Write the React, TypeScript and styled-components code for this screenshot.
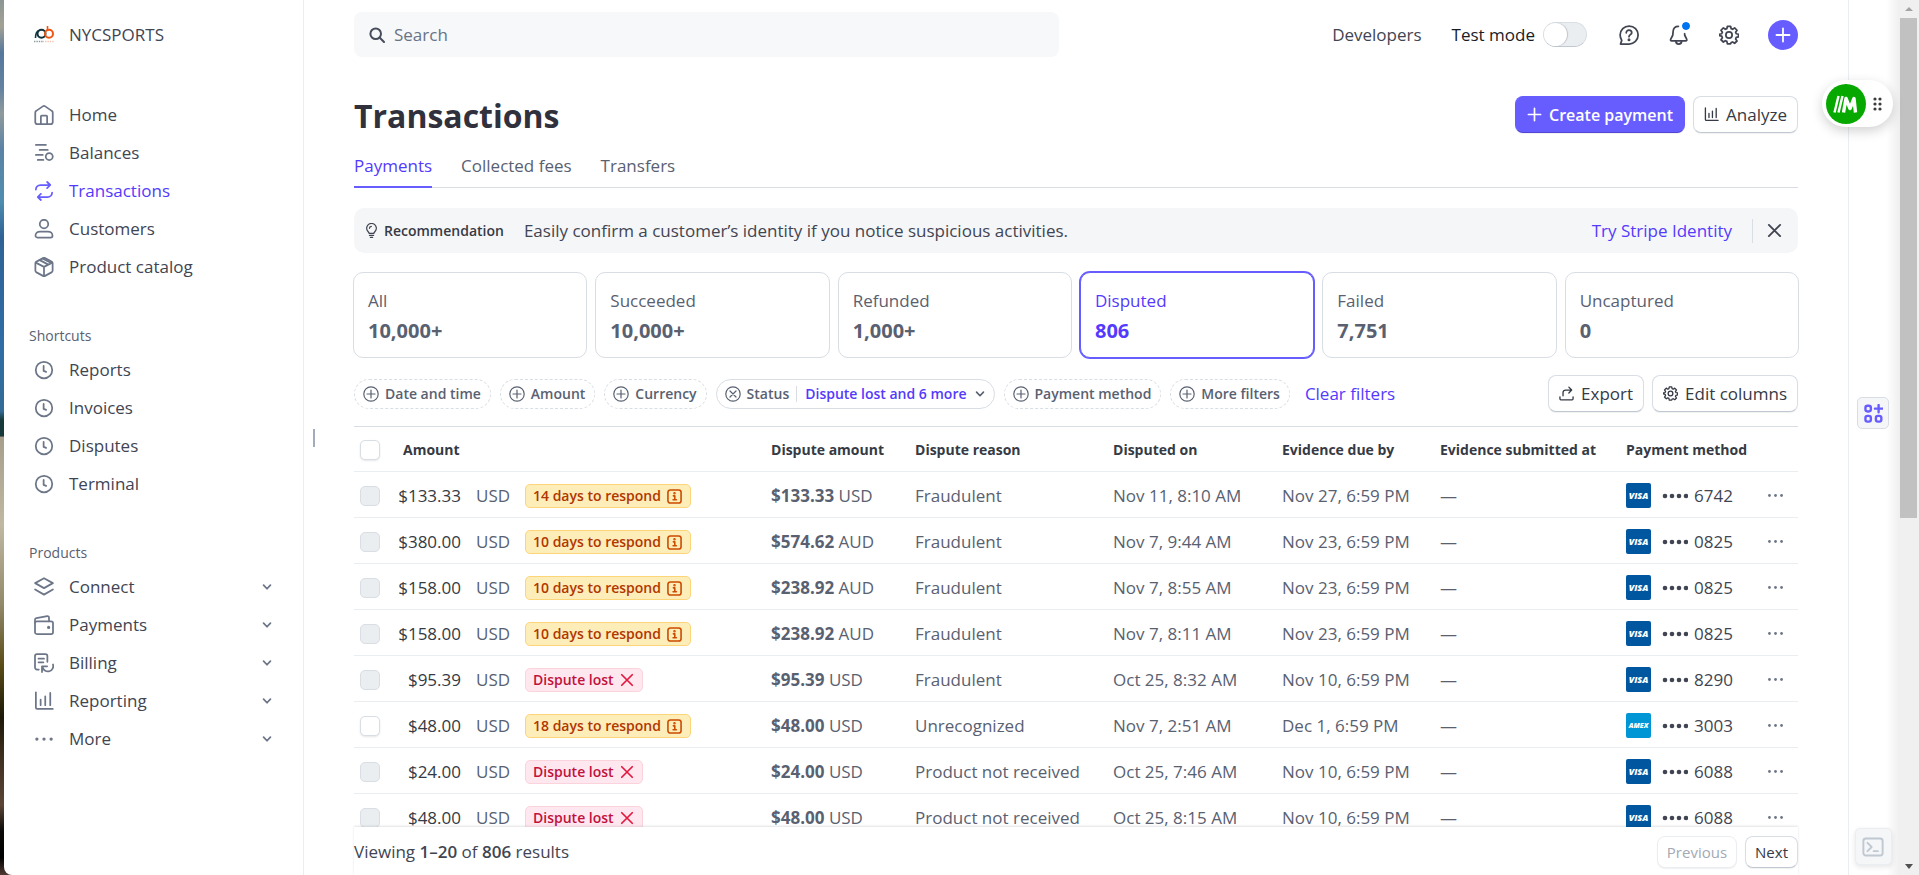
import React from "react";
import styled, { createGlobalStyle, css } from "styled-components";

const c = {
  text: "#353a44",
  muted: "#596171",
  icon: "#6c7688",
  brand: "#533afd",
  fill: "#675dff",
  line: "#ebeef1",
  border: "#d8dee4",
};

const Global = createGlobalStyle`
  *, *::before, *::after { box-sizing: border-box; }
  body {
    margin: 0;
    background: #fff;
    color: ${c.text};
    font: 400 17px/24px "Open Sans", "Noto Sans", sans-serif;
  }
  button, input { font: inherit; color: inherit; }
  button { cursor: pointer; white-space: nowrap; }
  a { color: inherit; text-decoration: none; }
  svg { display: block; flex: none; }
`;

/* ---------- shell ---------- */

const Shell = styled.div`
  display: flex;
  height: 100vh;
  overflow: hidden;
  background: linear-gradient(
    to bottom,
    #8d9594 0, #a3a194 3%, #56789b 6%, #6382a0 10%, #8f9a9c 13%, #5b83a5 17%,
    #4f8db0 23%, #2f6396 27%, #2f6da5 40%, #336b95 47%, #17393b 48%, #17393b 49.8%,
    #a79f8b 50%, #c0b8a0 60%, #938a6c 69%, #5b4c17 76%, #1c1808 82%,
    #3b2d1c 86%, #5c4536 92%, #0b0a08 95%, #000 98%, #513a33 100%
  );
`;

const Sidebar = styled.aside`
  flex: none;
  width: 300px;
  margin-left: 4px;
  padding: 20px 24px;
  background: #fff;
  border-right: 1px solid ${c.line};
  border-bottom-left-radius: 8px;
`;

const Main = styled.main`
  position: relative;
  flex: 1;
  min-width: 0;
  display: flex;
  flex-direction: column;
  padding: 12px 50px 0;
  background: #fff;
`;

const ResizeHandle = styled.span`
  position: absolute;
  left: 9px;
  top: 49%;
  width: 2px;
  height: 18px;
  background: #a3acba;
`;

const Rail = styled.aside`
  position: relative;
  flex: none;
  width: 50px;
  display: flex;
  flex-direction: column;
  align-items: center;
  justify-content: space-between;
  padding: 397px 1px 10px 0;
  background: linear-gradient(to right, #fff 76%, #f1f1f1);
  border-left: 1px solid ${c.line};
`;

const RailButton = styled.button<{ $raised?: boolean }>`
  display: grid;
  place-items: center;
  width: ${(p) => (p.$raised ? 37 : 32)}px;
  height: ${(p) => (p.$raised ? 37 : 32)}px;
  padding: 0;
  border: 1px solid ${(p) => (p.$raised ? c.line : c.border)};
  border-radius: 5px;
  background: #f5f6f8;
  color: ${(p) => (p.$raised ? "#c0c8d2" : c.fill)};
  box-shadow: ${(p) => (p.$raised ? "0 2px 5px rgba(48, 49, 61, 0.12)" : "none")};
`;

const FloatingWidget = styled.div`
  position: absolute;
  top: 80px;
  right: 5px;
  display: flex;
  align-items: center;
  gap: 7px;
  width: 71px;
  height: 47px;
  padding-left: 4px;
  border-radius: 24px;
  background: #fff;
  box-shadow: 0 4px 12px rgba(0, 0, 0, 0.18);
`;

const ScrollTrack = styled.div`
  flex: none;
  width: 21px;
  display: flex;
  flex-direction: column;
  align-items: center;
  padding: 7px 2px 6px;
  background: #f0f0f0;
`;

const ScrollThumb = styled.div`
  width: 17px;
  height: 58%;
  margin-top: 7px;
  margin-bottom: auto;
  background: #c1c1c1;
`;

/* ---------- sidebar ---------- */

const Account = styled.div`
  display: flex;
  align-items: center;
  gap: 15px;
  height: 30px;
  padding-left: 6px;
  color: #414552;
  font-weight: 500;
`;

const NavList = styled.ul`
  list-style: none;
  margin: 0;
  padding: 0;
`;

const NavLink = styled.a<{ $active?: boolean }>`
  display: flex;
  align-items: center;
  gap: 15px;
  height: 38px;
  padding: 0 7px 0 6px;
  color: ${(p) => (p.$active ? c.brand : "#414552")};
  font-weight: ${(p) => (p.$active ? 500 : 400)};
  > svg { color: ${(p) => (p.$active ? c.fill : c.icon)}; }
  > svg:last-child { margin-left: auto; }
  > svg:first-child { margin-left: 0; }
`;

const NavGroup = styled.nav<{ $first?: boolean }>`
  margin-top: ${(p) => (p.$first ? 46 : 35)}px;
`;

const NavHeading = styled.h2`
  margin: 0;
  padding-left: 1px;
  font-size: 14px;
  line-height: 30px;
  font-weight: 400;
  color: ${c.muted};
`;

/* ---------- header ---------- */

const TopBar = styled.header`
  display: flex;
  align-items: center;
  justify-content: space-between;
  height: 45px;
`;

const SearchBox = styled.label`
  display: flex;
  align-items: center;
  gap: 9px;
  flex: 0 1 705px;
  height: 45px;
  padding: 0 15px;
  border-radius: 8px;
  background: #f6f8fa;
  color: #474e5a;
  input {
    flex: 1;
    padding: 0;
    border: 0;
    outline: 0;
    background: none;
    &::placeholder { color: #687385; opacity: 1; }
  }
`;

const TopActions = styled.div`
  display: flex;
  align-items: center;
  color: #414552;
`;

const DevLink = styled.a`
  margin-right: 30px;
  font-weight: 500;
`;

const TestMode = styled.label`
  display: flex;
  align-items: center;
  gap: 8px;
  margin-right: 31px;
  font-weight: 500;
  color: #1a1b25;
`;

const Toggle = styled.input`
  appearance: none;
  width: 44px;
  height: 25px;
  margin: 0;
  padding: 0;
  border: 1px solid ${c.border};
  border-bottom-color: #c0c8d2;
  border-radius: 13px;
  background: #ebeef1;
  &::before {
    content: "";
    display: block;
    width: 23px;
    height: 23px;
    border-radius: 50%;
    background: #fff;
    box-shadow: 1px 0 1px rgba(64, 68, 82, 0.25);
  }
`;

const IconButton = styled.button`
  position: relative;
  display: grid;
  place-items: center;
  width: 22px;
  height: 30px;
  margin-right: 28px;
  padding: 0;
  border: 0;
  background: none;
`;

const AlertDot = styled.span`
  position: absolute;
  right: 0;
  top: 2px;
  width: 8px;
  height: 8px;
  border-radius: 50%;
  background: #0074f0;
  outline: 2px solid #fff;
`;

const AddButton = styled.button`
  display: grid;
  place-items: center;
  width: 30px;
  height: 30px;
  padding: 0;
  border: 0;
  border-radius: 50%;
  background: ${c.fill};
  color: #fff;
`;

/* ---------- page title and tabs ---------- */

const TitleRow = styled.div`
  display: flex;
  align-items: center;
  justify-content: space-between;
  margin-top: 35px;
  height: 45px;
  h1 {
    margin: 3px 0 0;
    font-size: 32px;
    line-height: 44px;
    font-weight: 700;
    color: #30313d;
  }
`;

const Buttons = styled.div`
  display: flex;
  gap: 8px;
`;

const Button = styled.button<{ $primary?: boolean; $small?: boolean }>`
  display: flex;
  align-items: center;
  gap: 7px;
  height: ${(p) => (p.$small ? 32 : 37)}px;
  padding: 0 ${(p) => (p.$small ? 9 : 10)}px;
  border: 1px solid ${c.border};
  border-bottom-color: #c0c8d2;
  border-radius: 8px;
  background: #fff;
  color: ${c.text};
  font-size: ${(p) => (p.$small ? 15 : 17)}px;
  font-weight: 500;
  box-shadow: 0 1px 1px rgba(0, 0, 0, 0.06);
  &:disabled { color: #a3a9b5; border-color: ${c.line}; }
  ${(p) => p.$primary && css`
    padding: 0 11px;
    background: ${c.fill};
    border-color: ${c.fill};
    border-bottom-color: #5246d9;
    color: #fff;
    font-size: 16px;
    font-weight: 600;
  `}
`;

const Tabs = styled.nav`
  display: flex;
  gap: 29px;
  height: 51px;
  border-bottom: 1px solid ${c.border};
`;

const Tab = styled.a<{ $active?: boolean }>`
  height: 51px;
  padding-top: 17px;
  border-bottom: 2px solid ${(p) => (p.$active ? c.fill : "transparent")};
  color: ${(p) => (p.$active ? c.brand : c.muted)};
  font-weight: 500;
`;

const Banner = styled.section`
  display: flex;
  align-items: center;
  height: 45px;
  margin-top: 20px;
  padding: 0 16px 0 10px;
  border-radius: 10px;
  background: #f5f6f8;
  color: #414552;
  strong {
    margin: 0 20px 0 5px;
    font-size: 14px;
    font-weight: 600;
    color: ${c.text};
  }
  a {
    margin-left: auto;
    padding-right: 20px;
    font-weight: 500;
    color: ${c.brand};
  }
`;

const CloseButton = styled.button`
  height: 24px;
  padding: 0 0 0 14px;
  border: 0;
  border-left: 1px solid ${c.border};
  background: none;
`;

/* ---------- status cards ---------- */

const Cards = styled.div`
  display: grid;
  grid-template-columns: repeat(6, 1fr);
  gap: 8px;
  margin: 19px -1px 0;
`;

const Card = styled.button<{ $active?: boolean }>`
  height: 86px;
  padding: 1px 13px 0 14px;
  border: 1px solid ${c.border};
  border-radius: 10px;
  background: #fff;
  color: ${c.muted};
  text-align: left;
  line-height: 30px;
  span, b { display: block; }
  b { font-size: 20px; }
  ${(p) => p.$active && css`
    border-color: ${c.fill};
    box-shadow: 0 0 0 1px ${c.fill};
    color: ${c.brand};
    font-weight: 500;
  `}
`;

/* ---------- filters ---------- */

const FilterBar = styled.div`
  display: flex;
  align-items: center;
  gap: 9px;
  margin: 17px 0 14px;
`;

const Chip = styled.button<{ $set?: boolean }>`
  display: flex;
  align-items: center;
  gap: 6px;
  height: 30px;
  padding: 0 9px 0 8px;
  border: 1px ${(p) => (p.$set ? "solid" : "dashed")} ${c.border};
  border-radius: 15px;
  background: #fff;
  color: ${c.muted};
  font-size: 14px;
  font-weight: 600;
  em {
    display: flex;
    align-items: center;
    gap: 8px;
    margin-left: 1px;
    padding-left: 8px;
    border-left: 1px solid ${c.border};
    line-height: 16px;
    font-style: normal;
    color: ${c.brand};
    svg { color: ${c.muted}; }
  }
`;

const ClearFilters = styled.a`
  margin: 0 auto 0 6px;
  font-weight: 500;
  color: ${c.brand};
  white-space: nowrap;
`;

/* ---------- table ---------- */

const TableArea = styled.div`
  flex: 1;
  min-height: 0;
  overflow: hidden;
`;

const Table = styled.table`
  width: 100%;
  table-layout: fixed;
  border-collapse: separate;
  border-spacing: 0;
  color: ${c.muted};
  white-space: nowrap;
`;

const Col = styled.col<{ $w: number }>`
  width: ${(p) => p.$w}px;
`;

const Th = styled.th<{ $inset?: boolean }>`
  height: 46px;
  padding: 2px 0 0 ${(p) => (p.$inset ? 5 : 0)}px;
  border-top: 1px solid ${c.border};
  border-bottom: 1px solid ${c.line};
  text-align: left;
  font-size: 14px;
  font-weight: 700;
  color: ${c.text};
`;

const Td = styled.td<{ $right?: boolean; $pad?: number }>`
  height: 46px;
  padding: 2px 0 0 ${(p) => p.$pad ?? 0}px;
  border-bottom: 1px solid ${c.line};
  text-align: ${(p) => (p.$right ? "right" : "left")};
`;

const Amount = styled.span`
  font-weight: 500;
  color: ${c.text};
`;

const Check = styled.input`
  appearance: none;
  display: block;
  width: 20px;
  height: 20px;
  margin: 0 0 0 6px;
  border: 1px solid ${c.border};
  border-radius: 5px;
  background: #fff;
  box-shadow: 0 1px 2px rgba(48, 49, 61, 0.12);
  &:disabled {
    background: #ebeef1;
    box-shadow: none;
  }
`;

const Badge = styled.span<{ $lost?: boolean }>`
  display: inline-flex;
  align-items: center;
  gap: 6px;
  height: 24px;
  padding: 0 8px 0 7px;
  border: 1px solid ${(p) => (p.$lost ? "#fbd3dc" : "#fcd579")};
  border-radius: 5px;
  background: ${(p) => (p.$lost ? "#ffe7f0" : "#fcedb9")};
  color: ${(p) => (p.$lost ? "#c0123c" : "#b13600")};
  font-size: 14px;
  font-weight: 600;
  vertical-align: middle;
  svg { color: ${(p) => (p.$lost ? "#df1b41" : "#cc4b00")}; }
`;

const Method = styled.span`
  display: flex;
  align-items: center;
  gap: 11px;
  color: #414552;
`;

const Brand = styled.span<{ $amex?: boolean }>`
  display: grid;
  place-items: center;
  width: 25px;
  height: 25px;
  border-radius: 2px;
  background: ${(p) => (p.$amex ? "#0095d5" : "#00579f")};
  color: #fff;
  font: italic 800 ${(p) => (p.$amex ? 7 : 9)}px/25px "Open Sans", sans-serif;
`;

const Masked = styled.span`
  display: flex;
  align-items: center;
  gap: 6px;
`;

const RowMenu = styled.button`
  display: block;
  padding: 4px 0;
  margin-left: 7px;
  border: 0;
  background: none;
  color: ${c.icon};
`;

const Footer = styled.footer`
  display: flex;
  align-items: center;
  justify-content: space-between;
  height: 48px;
  padding-top: 2px;
  background: #fff;
  color: #414552;
  box-shadow: 0 -1px 2px rgba(48, 49, 61, 0.14);
  b { font-weight: 600; }
`;

/* ---------- icons ---------- */

type SvgProps = { size?: number; sw?: number; children: React.ReactNode };
const Svg = ({ size = 20, sw = 1.4, children }: SvgProps) => (
  <svg width={size} height={size} viewBox="0 0 16 16" fill="none" stroke="currentColor" strokeWidth={sw} strokeLinecap="round" strokeLinejoin="round" aria-hidden="true">
    {children}
  </svg>
);

const icons = {
  home: <><path d="M1 6.2v7.3c0 1 .8 1.8 1.8 1.8h10.4c1 0 1.8-.8 1.8-1.8V6.2c0-.6-.3-1.2-.8-1.5L9 1.1a1.8 1.8 0 0 0-2 0L1.800 4.700c-.5.3-.8.9-.8 1.500Z" /><path d="M5.500 15V9.200c0-.4.300-.7.700-.7h3.600c.4 0 .7.300.7.700V15" /></>,
  balances: <><path d="M1.500 1.500h8M4.500 5.500H11M1.500 9.500h5.500M3 13.500h4.500" /><circle cx="12.200" cy="10.800" r="2.800" /></>,
  transactions: <><path d="M1.500 6.800c0-2 1.600-3.600 3.600-3.600H13M10.500.8 13 3.200l-2.500 2.500M14.500 9.200c0 2-1.600 3.600-3.600 3.600H3M5.500 15.200 3 12.800l2.500-2.500" /></>,
  customers: <><circle cx="8" cy="4" r="3.400" /><path d="M1.200 13.300c0-2 1.600-3.300 3.600-3.300h6.400c2 0 3.600 1.300 3.600 3.300 0 .9-.7 1.500-1.500 1.500H2.700c-.8 0-1.500-.6-1.500-1.500Z" /></>,
  catalog: <><path d="M7.200.9 2 3.700c-.6.300-.9.900-.9 1.500v5.600c0 .6.300 1.200.9 1.500l5.200 2.800c.5.300 1.100.3 1.600 0l5.200-2.800c.6-.3.900-.9.900-1.500V5.200c0-.6-.3-1.200-.9-1.500L8.800.9a1.700 1.700 0 0 0-1.600 0Z" /><path d="m1.400 4.500 6.600 3.400 6.600-3.400M8 7.900v7.300M4.600 2.500l6.500 3.400M7 1.400l6 3" /></>,
  clock: <><circle cx="8" cy="8" r="6.600" /><path d="M7.700 4.700V8.700l2 .8" /></>,
  connect: <><path d="M8 1 .9 4.900 8 8.900l7.100-4L8 1Z" /><path d="m.9 10 7.100 4.100 7.100-4.100" /></>,
  payments: <><rect x=".8" y="5" width="14.400" height="10.200" rx="1.500" /><path d="M.8 6V3.800c0-.7.500-1.200 1.100-1.300L10.600.9c.7-.1 1.400.4 1.400 1.200V5" /><circle cx="11.700" cy="9.900" r=".6" fill="currentColor" /></>,
  billing: <><path d="M3.800 13.200H2.400c-.9 0-1.600-.7-1.600-1.600V2.400C.8 1.500 1.500.8 2.400.8h6.700c.9 0 1.600.7 1.600 1.600V7M3.600 4.500H8M3.600 7.400H7.500M15.200 9.200a4.300 4.300 0 0 1-8.300 2.500M6.400 15.200V10.600H10.500" /></>,
  reporting: <path d="M1.500 1v12.300c0 .6.400 1 1 1H15M5.300 6.800v4.500M9 4.300v7M13 1.500v9.800" />,
  more: <g fill="currentColor" stroke="none"><circle cx="2.300" cy="8" r="1.300" /><circle cx="8" cy="8" r="1.300" /><circle cx="13.700" cy="8" r="1.300" /></g>,
  chevron: <path d="m2.500 5 5.500 5.800L13.500 5" />,
  plus: <path d="M8 1.500v13M1.500 8h13" />,
  close: <path d="m2 2 12 12M14 2 2 14" />,
  addCircle: <><circle cx="8" cy="8" r="7.200" /><path d="M8 4v8M4 8h8" /></>,
  removeCircle: <><circle cx="8" cy="8" r="7.200" /><path d="m5 5 6 6M11 5l-6 6" /></>,
  search: <><circle cx="6.700" cy="6.700" r="5.300" /><path d="m10.800 10.800 4.200 4.200" /></>,
  help: <><path d="M1.200 15.200h6.800A7.200 7.200 0 1 0 .9 8c0 1.700.5 3 1.300 4.300L1.200 15.200Z" /><path d="M5.800 6.200c0-1.300 1-2.200 2.200-2.200s2.200.9 2.200 2.100c0 1.600-2.200 1.600-2.200 3.200" /><circle cx="8" cy="11.700" r=".5" fill="currentColor" /></>,
  bell: <><path d="M7.500 1C5 1 3.500 2.700 3.300 5L3 8.200 1.300 11.500c-.3.500.1 1.200.7 1.200h11.500c.6 0 1-.7.700-1.200L12.600 8.200 12.500 7" /><path d="M5.500 13.200c.2 1.300 1.100 2 2.300 2s2.100-.7 2.300-2" /></>,
  gear: <><path d="M6.700 1h2.600l.4 1.900 1.200.5 1.600-1.100 1.900 1.900-1.100 1.600.5 1.200 1.800.4v2.100l-1.800.4-.5 1.300 1.100 1.600-1.900 1.800-1.600-1-1.200.5L9.300 15H6.700l-.4-1.900-1.200-.5-1.600 1-1.900-1.800 1.100-1.600-.5-1.300-1.800-.4V7.400l1.800-.4.500-1.200-1.100-1.600 1.900-1.900 1.600 1.100 1.200-.5L6.700 1Z" /><circle cx="8" cy="8" r="2.500" /></>,
  bulb: <><path d="M5.500 11C5.300 9.500 2.800 8.600 2.800 5.700a5.200 5.200 0 0 1 10.400 0c0 2.900-2.500 3.800-2.700 5.300Z" /><path d="M5.800 13.200h4.400M6.800 15.400h2.400M5.800 5.700c0-1.200.8-2 2-2.100" /></>,
  export: <path d="M1 11.500v2.200c0 .6.400 1 1 1h12c.6 0 1-.4 1-1v-2.200M4.300 10.500V7c0-1.500 1.200-2.700 2.700-2.700h6.300M10.500 1.200l3 3.100-3 3.100" />,
  info: <><rect x="1" y="1" width="14" height="14" rx="2.500" /><path d="M6.800 7.300H8.300v4M6.500 11.500h3.500" /><circle cx="8" cy="4.600" r=".5" fill="currentColor" /></>,
  apps: <><rect x="1.200" y="1.500" width="4.600" height="4.800" rx="1.800" /><rect x="1.200" y="10" width="4.600" height="4.800" rx="1.800" /><rect x="10" y="10" width="4.600" height="4.800" rx="1.800" /><path d="M12.300.8v6.200M9.200 3.900h6.200" /></>,
  terminal: <><rect x="1" y="1.800" width="14" height="12.400" rx="1.800" /><path d="m4 5 3 3-3 3M8.500 11H11.500" /></>,
};

type IconName = keyof typeof icons;
const Icon = ({ name, size, sw }: { name: IconName; size?: number; sw?: number }) => (
  <Svg size={size} sw={sw}>{icons[name]}</Svg>
);

const AccountLogo = () => (
  <svg width="20" height="20" viewBox="0 0 20 20" fill="none" aria-hidden="true">
    <path d="M1.500 13C1.500 9.500 2.500 6.500 5 5.500" stroke="#123a47" strokeWidth="1.600" />
    <circle cx="7.500" cy="8.700" r="4" stroke="#10303c" strokeWidth="2" />
    <path d="M13.500 1v5" stroke="#f0560f" strokeWidth="1.600" />
    <circle cx="15" cy="8.700" r="4" stroke="#f0560f" strokeWidth="2" />
    <path d="M0 16.500h10" stroke="#8d9ba1" strokeWidth="1.500" strokeDasharray="1.400 1" />
    <path d="M11 16.500h9" stroke="#f9c3ab" strokeWidth="1.500" strokeDasharray="1.400 1" />
  </svg>
);

const WidgetLogo = () => (
  <svg width="40" height="40" viewBox="0 0 40 40" aria-hidden="true">
    <circle cx="20" cy="20" r="20" fill="#07a900" />
    <g fill="none" stroke="#fff">
      <path d="M8.500 28.500 12.500 12" strokeWidth="2.400" />
      <path d="M12.500 28.500 16.500 12" strokeWidth="2.400" />
      <path d="M17.500 28.500 20 14.500 24 24.500 28 14.500 29.500 28.500" strokeWidth="3.400" strokeLinejoin="round" />
    </g>
  </svg>
);

const Grip = () => (
  <svg width="9" height="14" viewBox="0 0 9 14" fill="#3b3b3b" aria-hidden="true">
    {[2, 7, 12].map((y) => (
      <g key={y}><circle cx="2" cy={y} r="1.600" /><circle cx="7" cy={y} r="1.600" /></g>
    ))}
  </svg>
);

const Bullets = () => (
  <svg width="26" height="6" viewBox="0 0 26 6" fill="currentColor" role="img" aria-label="ending in">
    {[2, 9, 16, 23].map((x) => <circle key={x} cx={x + 1} cy="3" r="2.300" />)}
  </svg>
);

/* ---------- data ---------- */

const primaryNav: [string, IconName][] = [
  ["Home", "home"], ["Balances", "balances"], ["Transactions", "transactions"],
  ["Customers", "customers"], ["Product catalog", "catalog"],
];
const shortcuts = ["Reports", "Invoices", "Disputes", "Terminal"];
const products: [string, IconName][] = [
  ["Connect", "connect"], ["Payments", "payments"], ["Billing", "billing"],
  ["Reporting", "reporting"], ["More", "more"],
];
const cards = [
  ["All", "10,000+"], ["Succeeded", "10,000+"], ["Refunded", "1,000+"],
  ["Disputed", "806"], ["Failed", "7,751"], ["Uncaptured", "0"],
];

type Row = {
  amount: string; days?: number; disputed: string; cur: string; reason: string;
  on: string; due: string; last4: string; amex?: boolean;
};
const rows: Row[] = [
  { amount: "$133.33", days: 14, disputed: "$133.33", cur: "USD", reason: "Fraudulent", on: "Nov 11, 8:10 AM", due: "Nov 27, 6:59 PM", last4: "6742" },
  { amount: "$380.00", days: 10, disputed: "$574.62", cur: "AUD", reason: "Fraudulent", on: "Nov 7, 9:44 AM", due: "Nov 23, 6:59 PM", last4: "0825" },
  { amount: "$158.00", days: 10, disputed: "$238.92", cur: "AUD", reason: "Fraudulent", on: "Nov 7, 8:55 AM", due: "Nov 23, 6:59 PM", last4: "0825" },
  { amount: "$158.00", days: 10, disputed: "$238.92", cur: "AUD", reason: "Fraudulent", on: "Nov 7, 8:11 AM", due: "Nov 23, 6:59 PM", last4: "0825" },
  { amount: "$95.39", disputed: "$95.39", cur: "USD", reason: "Fraudulent", on: "Oct 25, 8:32 AM", due: "Nov 10, 6:59 PM", last4: "8290" },
  { amount: "$48.00", days: 18, disputed: "$48.00", cur: "USD", reason: "Unrecognized", on: "Nov 7, 2:51 AM", due: "Dec 1, 6:59 PM", last4: "3003", amex: true },
  { amount: "$24.00", disputed: "$24.00", cur: "USD", reason: "Product not received", on: "Oct 25, 7:46 AM", due: "Nov 10, 6:59 PM", last4: "6088" },
  { amount: "$48.00", disputed: "$48.00", cur: "USD", reason: "Product not received", on: "Oct 25, 8:15 AM", due: "Nov 10, 6:59 PM", last4: "6088" },
];
const columnWidths = [44, 63, 64, 246, 144, 198, 169, 158, 186, 134, 38];

/* ---------- page ---------- */

const AddChip = ({ label }: { label: string }) => (
  <Chip type="button"><Icon name="addCircle" size={16} sw={1.2} />{label}</Chip>
);

const PaymentRow = ({ row }: { row: Row }) => (
  <tr>
    <Td><Check type="checkbox" aria-label={`Select ${row.amount}`} disabled={!row.amex} /></Td>
    <Td $right><Amount>{row.amount}</Amount></Td>
    <Td $pad={15}>USD</Td>
    <Td>
      {row.days
        ? <Badge>{row.days} days to respond<Icon name="info" size={15} sw={1.7} /></Badge>
        : <Badge $lost>Dispute lost<Icon name="close" size={14} sw={2} /></Badge>}
    </Td>
    <Td><b>{row.disputed}</b> {row.cur}</Td>
    <Td>{row.reason}</Td>
    <Td>{row.on}</Td>
    <Td>{row.due}</Td>
    <Td>—</Td>
    <Td>
      <Method>
        <Brand $amex={row.amex}>{row.amex ? "AMEX" : "VISA"}</Brand>
        <Masked><Bullets />{row.last4}</Masked>
      </Method>
    </Td>
    <Td><RowMenu type="button" aria-label="Row actions"><Icon name="more" size={17} /></RowMenu></Td>
  </tr>
);

export default function App() {
  return (
    <>
      <Global />
      <Shell>
        <Sidebar>
          <Account><AccountLogo />NYCSPORTS</Account>
          <NavGroup $first aria-label="Main">
            <NavList>
              {primaryNav.map(([label, icon]) => (
                <li key={label}>
                  <NavLink href="#" $active={label === "Transactions"}><Icon name={icon} />{label}</NavLink>
                </li>
              ))}
            </NavList>
          </NavGroup>
          <NavGroup aria-labelledby="shortcuts">
            <NavHeading id="shortcuts">Shortcuts</NavHeading>
            <NavList>
              {shortcuts.map((label) => (
                <li key={label}><NavLink href="#"><Icon name="clock" />{label}</NavLink></li>
              ))}
            </NavList>
          </NavGroup>
          <NavGroup aria-labelledby="products">
            <NavHeading id="products">Products</NavHeading>
            <NavList>
              {products.map(([label, icon]) => (
                <li key={label}>
                  <NavLink href="#"><Icon name={icon} />{label}<Icon name="chevron" size={10} sw={2.800} /></NavLink>
                </li>
              ))}
            </NavList>
          </NavGroup>
        </Sidebar>

        <Main>
          <ResizeHandle />
          <TopBar>
            <SearchBox>
              <Icon name="search" size={16} sw={2} />
              <input type="text" placeholder="Search" aria-label="Search" />
            </SearchBox>
            <TopActions>
              <DevLink href="#">Developers</DevLink>
              <TestMode>Test mode<Toggle type="checkbox" role="switch" /></TestMode>
              <IconButton type="button" aria-label="Help"><Icon name="help" /></IconButton>
              <IconButton type="button" aria-label="Notifications"><Icon name="bell" /><AlertDot /></IconButton>
              <IconButton type="button" aria-label="Settings"><Icon name="gear" /></IconButton>
              <AddButton type="button" aria-label="Create"><Icon name="plus" size={16} sw={1.800} /></AddButton>
            </TopActions>
          </TopBar>

          <TitleRow>
            <h1>Transactions</h1>
            <Buttons>
              <Button $primary type="button"><Icon name="plus" size={15} sw={1.800} />Create payment</Button>
              <Button type="button"><Icon name="reporting" size={15} />Analyze</Button>
            </Buttons>
          </TitleRow>
          <Tabs>
            <Tab href="#" $active>Payments</Tab>
            <Tab href="#">Collected fees</Tab>
            <Tab href="#">Transfers</Tab>
          </Tabs>

          <Banner>
            <Icon name="bulb" size={15} sw={1.300} />
            <strong>Recommendation</strong>
            <span>Easily confirm a customer’s identity if you notice suspicious activities.</span>
            <a href="#">Try Stripe Identity</a>
            <CloseButton type="button" aria-label="Dismiss"><Icon name="close" size={15} sw={2} /></CloseButton>
          </Banner>

          <Cards>
            {cards.map(([label, count]) => (
              <Card key={label} type="button" $active={label === "Disputed"}>
                <span>{label}</span>
                <b>{count}</b>
              </Card>
            ))}
          </Cards>

          <FilterBar>
            <AddChip label="Date and time" />
            <AddChip label="Amount" />
            <AddChip label="Currency" />
            <Chip $set type="button">
              <Icon name="removeCircle" size={16} sw={1.200} />Status
              <em>Dispute lost and 6 more<Icon name="chevron" size={10} sw={2.600} /></em>
            </Chip>
            <AddChip label="Payment method" />
            <AddChip label="More filters" />
            <ClearFilters href="#">Clear filters</ClearFilters>
            <Buttons>
              <Button type="button"><Icon name="export" size={15} />Export</Button>
              <Button type="button"><Icon name="gear" size={15} />Edit columns</Button>
            </Buttons>
          </FilterBar>

          <TableArea>
            <Table>
              <colgroup>{columnWidths.map((w, i) => <Col key={i} $w={w} />)}</colgroup>
              <thead>
                <tr>
                  <Th><Check type="checkbox" aria-label="Select all" /></Th>
                  <Th $inset colSpan={3}>Amount</Th>
                  <Th>Dispute amount</Th>
                  <Th>Dispute reason</Th>
                  <Th>Disputed on</Th>
                  <Th>Evidence due by</Th>
                  <Th>Evidence submitted at</Th>
                  <Th colSpan={2}>Payment method</Th>
                </tr>
              </thead>
              <tbody>{rows.map((row, i) => <PaymentRow key={i} row={row} />)}</tbody>
            </Table>
          </TableArea>

          <Footer>
            <span>Viewing <b>1–20</b> of <b>806</b> results</span>
            <Buttons>
              <Button $small type="button" disabled>Previous</Button>
              <Button $small type="button">Next</Button>
            </Buttons>
          </Footer>
        </Main>

        <Rail>
          <FloatingWidget><WidgetLogo /><Grip /></FloatingWidget>
          <RailButton type="button" aria-label="Apps"><Icon name="apps" size={19} sw={2} /></RailButton>
          <RailButton $raised type="button" aria-label="Open shell"><Icon name="terminal" size={22} /></RailButton>
        </Rail>
        <ScrollTrack>
          <svg width="8" height="4" viewBox="0 0 8 4"><path d="M0 4 4 0l4 4Z" fill="#a3a3a3" /></svg>
          <ScrollThumb />
          <svg width="8" height="5" viewBox="0 0 8 5"><path d="M0 0h8L4 5Z" fill="#505050" /></svg>
        </ScrollTrack>
      </Shell>
    </>
  );
}
